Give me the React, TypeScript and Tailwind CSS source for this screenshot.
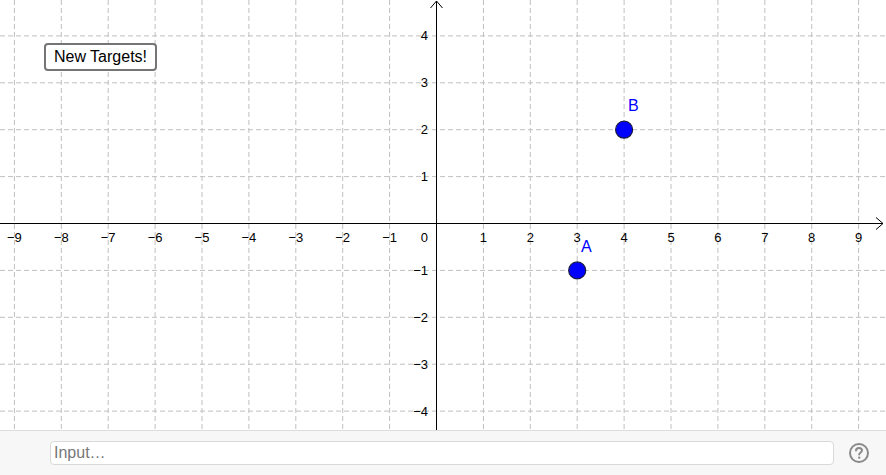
import React from "react";

const OX = 436.5;
const OY = 223.5;
const U = 46.9;

const xs = [-9, -8, -7, -6, -5, -4, -3, -2, -1, 1, 2, 3, 4, 5, 6, 7, 8, 9];
const ys = [-4, -3, -2, -1, 1, 2, 3, 4];

function fmt(n: number) {
  return n < 0 ? "\u2212" + Math.abs(n) : String(n);
}

function Graph() {
  return (
    <svg width="886" height="430" className="block" style={{ fontFamily: '"Liberation Sans", Arial, sans-serif' }}>
      {xs.map((k) => (
        <line key={"gx" + k} x1={OX + k * U} y1={0} x2={OX + k * U} y2={430} stroke="#c0c0c0" strokeDasharray="5,3" />
      ))}
      {[-5, ...ys].map((k) => (
        <line key={"gy" + k} x1={0} y1={OY - k * U} x2={886} y2={OY - k * U} stroke="#c0c0c0" strokeDasharray="5,3" />
      ))}
      {/* axes */}
      <line x1={0} y1={OY} x2={883} y2={OY} stroke="#000" />
      <path d={`M876 ${OY - 6} L883 ${OY} L876 ${OY + 6}`} fill="none" stroke="#000" />
      <line x1={OX} y1={1} x2={OX} y2={430} stroke="#000" />
      <path d={`M${OX - 6} 8 L${OX} 1 L${OX + 6} 8`} fill="none" stroke="#000" />
      {xs.map((k) => (
        <text key={"lx" + k} x={OX + k * U} y={242} fontSize="13" textAnchor="middle" fill="#000">
          {fmt(k)}
        </text>
      ))}
      <text x={428} y={242} fontSize="13" textAnchor="end" fill="#000">0</text>
      {ys.map((k) => (
        <text key={"ly" + k} x={428} y={OY - k * U + 4.5} fontSize="13" textAnchor="end" fill="#000">
          {fmt(k)}
        </text>
      ))}
      {/* points */}
      <circle cx={OX + 4 * U} cy={OY - 2 * U} r={8.5} fill="#0000ff" stroke="#1a1a40" strokeWidth="1.2" />
      <text x={628} y={111} fontSize="16" fill="#0000ff">B</text>
      <circle cx={OX + 3 * U} cy={OY + 1 * U} r={8.5} fill="#0000ff" stroke="#1a1a40" strokeWidth="1.2" />
      <text x={581} y={252} fontSize="16" fill="#0000ff">A</text>
    </svg>
  );
}

export default function App() {
  return (
    <div className="w-[886px] h-[475px] flex flex-col bg-white overflow-hidden font-['Liberation_Sans',Arial,sans-serif]">
      <div className="relative h-[430px] shrink-0">
        <Graph />
        <button className="absolute left-[44px] top-[43px] w-[113px] h-[28px] bg-white border-2 border-[#757575] rounded-[4px] text-[16px] text-black leading-none">
          New Targets!
        </button>
      </div>
      <div className="flex-1 bg-[#f7f7f7] border-t border-[#dcdcdc] flex items-center pl-[50px] pr-[16px] gap-[14px]">
        <div className="flex-1 h-[24px] bg-white border border-[#d9d9d9] rounded-[4px] flex items-center px-[3px] text-[16px] text-[#777]">
          Input…
        </div>
        <svg width="22" height="22" viewBox="0 0 22 22">
          <circle cx="11" cy="11" r="9" fill="none" stroke="#8a8a8a" strokeWidth="2" />
          <path d="M8 8.6 C8 6.8 9.4 6 11 6 C12.7 6 14 7 14 8.5 C14 10.3 11.2 10.6 11.2 12.6" fill="none" stroke="#8a8a8a" strokeWidth="2" strokeLinecap="round" />
          <circle cx="11.2" cy="15.6" r="1.2" fill="#8a8a8a" />
        </svg>
      </div>
    </div>
  );
}
